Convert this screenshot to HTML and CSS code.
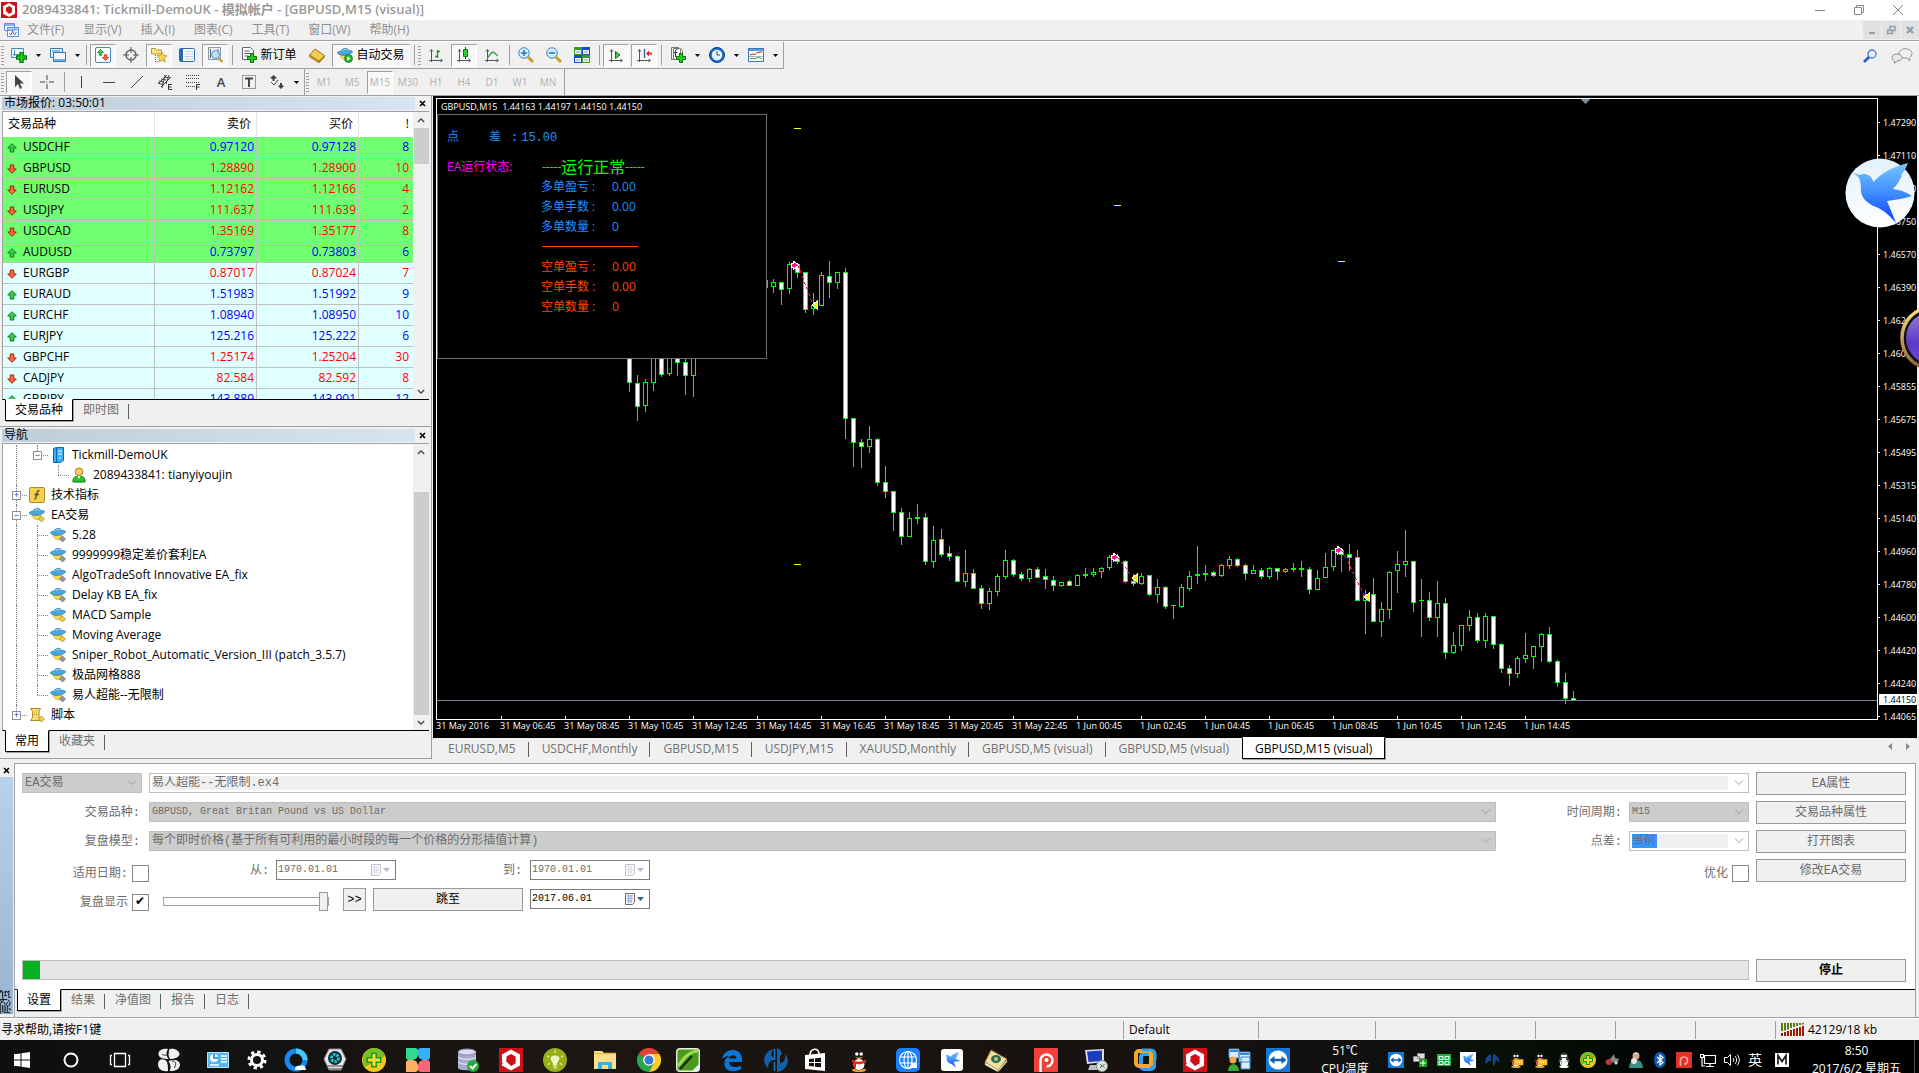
FILE: index.html
```html
<!DOCTYPE html>
<html lang="zh-CN">
<head>
<meta charset="utf-8">
<title>2089433841: Tickmill-DemoUK - 模拟帐户 - [GBPUSD,M15 (visual)]</title>
<link rel="stylesheet" href="styles.css">
</head>
<body>
<svg class="defs" aria-hidden="true">
  <defs>
    <linearGradient id="birdFill" x1="0" y1="0" x2="0" y2="1"><stop offset="0" stop-color="#74c6ff"/><stop offset=".5" stop-color="#3f8dff"/><stop offset="1" stop-color="#0a3cff"/></linearGradient>
    <linearGradient id="birdBg" x1="0" y1="0" x2="0" y2="1"><stop offset="0" stop-color="#e3f0fc"/><stop offset="1" stop-color="#fff"/></linearGradient>
    <linearGradient id="orbRing" x1="0" y1="0" x2="0" y2="1"><stop offset="0" stop-color="#ffe08a"/><stop offset="1" stop-color="#8a6232"/></linearGradient>
    <linearGradient id="orbFill" x1="0" y1="0" x2="0" y2="1"><stop offset="0" stop-color="#9a80cc"/><stop offset=".6" stop-color="#5a38c8"/><stop offset="1" stop-color="#7048d8"/></linearGradient>
    <symbol id="up" viewBox="0 0 10 10"><path d="M5 .7 9.3 5H6.8v4H3.2V5H.7z" fill="#3ccc4c" stroke="#0d7a1c"/></symbol>
    <symbol id="down" viewBox="0 0 10 10"><path d="M5 9.3 9.3 5H6.8V1H3.2v4H.7z" fill="#ff6a3c" stroke="#a81c04"/></symbol>
    <symbol id="hat" viewBox="0 0 16 16"><path d="M3.500 8c0 3.500 3 5 6 4.500L12 8z" fill="#f6dc4c" stroke="#b89420" stroke-width=".6"/><path d="M4 4.500C4.500 1 10.500 0 11.500 3.500c2 0 3.800.2 4 1C15.700 6.500 10 8.500 6 8.200 3 8 .3 7 .5 5.500c.1-.9 2-1.200 3.500-1z" fill="#4aa8e0" stroke="#2574a8" stroke-width=".7"/><path d="M5.500 4c1-2 4-2.200 5-.5" fill="none" stroke="#a8dcf8"/></symbol>
    <symbol id="ea" viewBox="0 0 16 16"><use href="#hat" width="16" height="16"/><path d="M12.500 9l3 3-3 3-3-3z" fill="#9a9a9a" stroke="#6a6a6a" stroke-width=".7"/></symbol>
    <symbol id="eay" viewBox="0 0 16 16"><use href="#hat" width="16" height="16"/><path d="M12.500 9l3 3-3 3-3-3z" fill="#f4cc40" stroke="#a88018" stroke-width=".7"/></symbol>
    <symbol id="plus" viewBox="0 0 10 10"><path d="M3.500 .5h3v3h3v3h-3v3h-3v-3h-3v-3h3z" fill="#1ed01e" stroke="#067806"/></symbol>
    <symbol id="axes" viewBox="0 0 16 16"><path d="M3.500 3v12M1 13.500h13M2 4.500l1.500-2L5 4.500M12.500 12l2 1.500-2 1.500" fill="none" stroke="#555"/></symbol>
    <symbol id="caret" viewBox="0 0 5 3"><path d="M0 0h5L2.500 3z" fill="#000"/></symbol>
    <symbol id="chev" viewBox="0 0 10 6"><path d="M1 .5l4 4 4-4" fill="none" stroke="#a0a0a0"/></symbol>
    <symbol id="cal" viewBox="0 0 20 14"><path d="M1.500 1.500h9v9l-2 2h-7z" fill="#eef2fa" stroke="#7a6a6a"/><path d="M3 4h6M3 6.500h6M3 9h5M4.500 3v8M7 3v8" stroke="#8aa0c8" stroke-width=".8"/><path d="M13 5h7l-3.500 4z" fill="#3a5a98"/></symbol>
    <symbol id="fxlogo" viewBox="0 0 24 24"><path d="M0 0h24v24H0z" fill="#d01018"/><path d="M12 1.500l9 5v2.500l-4 2-.5-2.500L12 6 7.500 8.500v5L5 16l-2-1.500v-8z" fill="#fff"/><path d="M12 22.500l-9-5V16l4.500-2.500 4.500 4.500 4.500-2.500v-5L19 8.500l2 1v8z" fill="#fff"/><path d="M7 13l5-5M12 16.500l5-5" stroke="#d01018"/></symbol>
    <symbol id="bird" viewBox="0 0 68 60"><path d="M0 8l13 4c4-2 11-1 13.500 7C34 10 48 3 61 0c-2 5-4 9-7 12l1 1c-3 5-5 9-9 13 8 1 15 4 19 7-10 3-18 4-25 5 3 7 6 14 9 22-5-6-12-13-20-16-10-4-16-10-15-20-1-7 0-12-14-16z" fill="url(#birdFill)"/></symbol>
    <symbol id="tv" viewBox="0 0 24 24"><path d="M0 0h24v24H0z" fill="#1478d4"/><circle cx="12" cy="12" r="9.500" fill="#fff"/><path d="M3.500 12l5-4v2.700h7V8l5 4-5 4v-2.700h-7V16z" fill="#1060b8"/></symbol>
    <symbol id="qq" viewBox="0 0 24 24"><ellipse cx="12" cy="22" rx="7" ry="2" fill="#f8a818"/><ellipse cx="12" cy="14" rx="8.500" ry="8.500" fill="#111"/><ellipse cx="12" cy="8" rx="6.500" ry="7.500" fill="#1a1a1a"/><ellipse cx="12" cy="16.500" rx="5.500" ry="5.500" fill="#fff"/><circle cx="9.800" cy="6" r="1.700" fill="#fff"/><circle cx="14.200" cy="6" r="1.700" fill="#fff"/><path d="M8 9.500h8l-4 2z" fill="#f8a818"/><path d="M5 11.500c5 3 9 3 14 0v3c-5 2-7 2-10 1.500V20H7v-5l-2-1z" fill="#e82818"/></symbol>
    <symbol id="plus360" viewBox="0 0 24 24"><circle cx="12" cy="12" r="12" fill="#f8c818"/><path d="M12 0a12 12 0 0 1 11 8L3 19A12 12 0 0 1 12 0z" fill="#78c028"/><path d="M9 4.500h6V9h4.500v6H15v4.500H9V15H4.500V9H9z" fill="#18982c"/><path d="M10.500 6h3v4.500H18v3h-4.500V18h-3v-4.500H6v-3h4.500z" fill="#f4dc30"/></symbol>
  </defs>
</svg>

<header class="titlebar">
  <svg class="i16"><use href="#fxlogo"/></svg>
  <h1>2089433841: Tickmill-DemoUK - 模拟帐户 - [GBPUSD,M15 (visual)]</h1>
  <div class="winbtns">
    <button aria-label="最小化"><svg class="i12" viewBox="0 0 12 12"><path d="M1 6.500h10" stroke="#888"/></svg></button>
    <button aria-label="还原"><svg class="i12" viewBox="0 0 12 12"><path d="M1.500 3.500h7v7h-7zM3.500 3V1.500h7v7H9" fill="none" stroke="#888"/></svg></button>
    <button aria-label="关闭"><svg class="i12" viewBox="0 0 12 12"><path d="M1 1l10 10M11 1L1 11" stroke="#888"/></svg></button>
  </div>
</header>

<nav class="menubar">
  <svg class="i16" viewBox="0 0 16 16"><path d="M1.500 1.500h10v7h-10zM4.500 5.500h11v9h-11z" fill="#fff" stroke="#5a90e0"/><path d="M2 3h9M5 7.500h10" stroke="#8ab4f0" stroke-width="2"/><path d="M6 11l2 2 1.500-4 2 4 2-3" fill="none" stroke="#3a70c8"/></svg>
  <button>文件(F)</button><button>显示(V)</button><button>插入(I)</button><button>图表(C)</button><button>工具(T)</button><button>窗口(W)</button><button>帮助(H)</button>
  <div class="mdibtns">
    <button aria-label="最小化图表"><svg class="i10" viewBox="0 0 10 10"><path d="M2 8h6" stroke="#8fa0b0" stroke-width="2"/></svg></button>
    <button aria-label="还原图表"><svg class="i10" viewBox="0 0 10 10"><path d="M1.500 5.500h5v3h-5zM4 4V1.500h5v4H7.500M1 5h6M4 1.500h5" fill="none" stroke="#8fa0b0" stroke-width="1.500"/></svg></button>
    <button aria-label="关闭图表"><svg class="i10" viewBox="0 0 10 10"><path d="M2 2l6 6M8 2L2 8" stroke="#8fa0b0" stroke-width="2.400"/></svg></button>
  </div>
</nav>

<div class="toolrow">
  <div class="toolbar">
    <i class="grip"></i>
    <button class="tb" aria-label="新图表"><svg viewBox="0 0 16 16"><path d="M.5 1.500h12v9H.5z" fill="#eef6ff" stroke="#4a88c0"/><path d="M3.500 3v6M2 7.500h7" stroke="#4a88c0"/><use href="#plus" x="5" y="5" width="11" height="11"/></svg></button>
    <button class="drop" aria-label="新图表菜单"><svg><use href="#caret"/></svg></button>
    <button class="tb" aria-label="配置"><svg viewBox="0 0 16 16"><path d="M.5 1.500h12v9H.5z" fill="#dceeff" stroke="#3a78b0"/><path d="M3.500 5.500h12v9h-12z" fill="#eef6ff" stroke="#3a78b0"/><path d="M4 13h11" stroke="#78acdc" stroke-width="2"/><path d="M2 4h8" stroke="#4a88c0"/></svg></button>
    <button class="drop" aria-label="配置菜单"><svg><use href="#caret"/></svg></button>
    <i class="sep"></i>
    <button class="tb on" aria-label="市场报价"><svg viewBox="0 0 16 16"><rect x=".5" y=".5" width="15" height="15" rx="1.500" fill="#fff" stroke="#4a88c0"/><use href="#up" x="2" y="2" width="7" height="7"/><use href="#down" x="7" y="7" width="7" height="7"/></svg></button>
    <button class="tb" aria-label="数据窗口"><svg viewBox="0 0 16 16"><circle cx="8" cy="8" r="5" fill="none" stroke="#666" stroke-width="1.500"/><path d="M8 0v6M8 10v6M0 8h6M10 8h6" stroke="#555"/></svg></button>
    <button class="tb on" aria-label="导航"><svg viewBox="0 0 16 16"><path d="M.5 1.500h4l1 1.500h5v4H.5z" fill="#fce288" stroke="#c09828"/><path d="M4.500 8v7h3" fill="none" stroke="#666" stroke-dasharray="1"/><path d="M11 5l1.500 3.500 3.500.3-2.700 2.300.9 3.900-3.200-2-3.200 2 .9-3.900L6 8.800l3.500-.3z" fill="#fcd848" stroke="#b08418" stroke-width=".7"/></svg></button>
    <button class="tb" aria-label="终端"><svg viewBox="0 0 16 16"><rect x=".5" y="1.500" width="15" height="13" rx="1" fill="#fff" stroke="#2a68b0"/><path d="M2.500 2v12" stroke="#2a68b0" stroke-width="3"/><path d="M6 4.500h8M6 7h8M6 9.500h8M6 12h8" stroke="#b8ccdc"/></svg></button>
    <button class="tb on" aria-label="策略测试"><svg viewBox="0 0 16 16"><path d="M1.500.5h12v12h-12z" fill="#e8eef4" stroke="#8898a8"/><path d="M3.500 2v9M11 2v5" stroke="#667"/><circle cx="8.500" cy="7.500" r="4" fill="#b8dcf8" fill-opacity=".8" stroke="#5a90c0"/><path d="M11.500 11l4 4" stroke="#c89820" stroke-width="2.200"/></svg></button>
    <i class="sep"></i>
    <button class="tb wide"><svg viewBox="0 0 16 16"><path d="M1.500.5h8l3 3v9h-11z" fill="#fff" stroke="#666"/><path d="M3.500 4h5M3.500 6.500h7M3.500 9h4" stroke="#556"/><use href="#plus" x="6" y="6" width="10" height="10"/></svg>新订单</button>
    <button class="tb" aria-label="MetaEditor"><svg viewBox="0 0 16 16"><path d="M.5 8L6 2l9.500 6.500L10 14z" fill="#f4cc50" stroke="#a07818"/><path d="M.5 8v2l9.500 6v-2zM10 14v2l5.500-5.500v-2z" fill="#c89428" stroke="#a07818" stroke-width=".6"/></svg></button>
    <button class="tb wide on auto"><svg viewBox="0 0 16 16"><use href="#hat" width="16" height="16"/><circle cx="11.500" cy="11.500" r="4" fill="#28b028" stroke="#0a6a0a" stroke-width=".6"/><path d="M10.200 9.300l3.500 2.200-3.500 2.200z" fill="#fff"/></svg>自动交易</button>
    <i class="sep"></i><i class="grip"></i>
    <button class="tb" aria-label="柱状图"><svg viewBox="0 0 16 16"><use href="#axes"/><path d="M9.500 3v8M7 9.500h2.500M9.500 4.500H12" stroke="#1a9a1a" fill="none" stroke-width="1.400"/></svg></button>
    <button class="tb on" aria-label="蜡烛图"><svg viewBox="0 0 16 16"><use href="#axes"/><path d="M9.500 0v12" stroke="#0a6a0a"/><path d="M7.500 2.500h4v7h-4z" fill="#2cd02c" stroke="#0a7a0a"/></svg></button>
    <button class="tb" aria-label="折线图"><svg viewBox="0 0 16 16"><use href="#axes"/><path d="M3 11c2-1 4-6 6-6 2 .5 3 3 5 4" fill="none" stroke="#3aa03a" stroke-width="1.300"/></svg></button>
    <i class="sep"></i>
    <button class="tb" aria-label="放大"><svg viewBox="0 0 16 16"><path d="M10 10l5 5" stroke="#c8a020" stroke-width="3"/><circle cx="6" cy="6" r="5.300" fill="#d0ecfc" stroke="#3a88c8"/><path d="M6 3v6M3 6h6" stroke="#2878b8" stroke-width="1.600"/></svg></button>
    <button class="tb" aria-label="缩小"><svg viewBox="0 0 16 16"><path d="M10 10l5 5" stroke="#c8a020" stroke-width="3"/><circle cx="6" cy="6" r="5.300" fill="#d0ecfc" stroke="#3a88c8"/><path d="M3 6h6" stroke="#2878b8" stroke-width="1.600"/></svg></button>
    <button class="tb" aria-label="平铺"><svg viewBox="0 0 16 16"><path d="M0 0h8v8H0zM8 8h8v8H8z" fill="#3c9a1c"/><path d="M8 0h8v8H8zM0 8h8v8H0z" fill="#1a4cc8"/><path d="M1 3h6v4H1zM9 3h6v4H9zM1 11h6v4H1zM9 11h6v4H9z" fill="#e8f4f0"/><path d="M2 5h4M10 5h4M2 13h4M10 13h4" stroke="#88a8b8"/></svg></button>
    <i class="sep"></i>
    <button class="tb on" aria-label="自动滚动"><svg viewBox="0 0 16 16"><use href="#axes"/><path d="M7.500 4.500v7l4.500-3.500z" fill="#3ccc4c" stroke="#0a7a0a"/></svg></button>
    <button class="tb on" aria-label="图表平移"><svg viewBox="0 0 16 16"><use href="#axes"/><path d="M8.500 2v9" stroke="#2868a8" stroke-width="1.400"/><path d="M10 6.500l3-3v2h3v2h-3v2z" fill="#d83010"/></svg></button>
    <i class="sep"></i>
    <button class="tb" aria-label="指标"><svg viewBox="0 0 16 16"><path d="M3.500 1.500h7l2 2v9h-9zM1.500.5h7l2 2v10h-9z" fill="#fff" stroke="#777"/><path d="M7.500 2.500c-2-.5-2 1-2 3V10M3.500 5.500h4" fill="none" stroke="#333"/><use href="#plus" x="6" y="6" width="10" height="10"/></svg></button>
    <button class="drop" aria-label="指标菜单"><svg><use href="#caret"/></svg></button>
    <button class="tb" aria-label="周期"><svg viewBox="0 0 16 16"><circle cx="8" cy="8" r="7.500" fill="#1a70c8" stroke="#0a3c88"/><circle cx="8" cy="8" r="5.200" fill="#e8f4ff"/><path d="M8 4v4h3" fill="none" stroke="#444"/></svg></button>
    <button class="drop" aria-label="周期菜单"><svg><use href="#caret"/></svg></button>
    <button class="tb" aria-label="模板"><svg viewBox="0 0 16 16"><rect x=".5" y="1.500" width="15" height="13" fill="#fff" stroke="#3a78b8"/><path d="M1 3h14" stroke="#5a9ce0" stroke-width="2"/><path d="M2 8l3-1 2 .5 2-2 5-.5" fill="none" stroke="#a03018"/><path d="M2 12l3-1 2 1 3-2 2 1 2 1" fill="none" stroke="#3a9a3a"/><path d="M1 9.500h14" stroke="#a8b8c8"/></svg></button>
    <button class="drop" aria-label="模板菜单"><svg><use href="#caret"/></svg></button>
    <i class="edge"></i>
  </div>
  <div class="topright">
    <button aria-label="搜索"><svg class="i14" viewBox="0 0 14 14"><circle cx="9" cy="5" r="4" fill="#e8f0ff" stroke="#4a78e0" stroke-width="1.300"/><path d="M6 8l-5 5" stroke="#2a58d0" stroke-width="2.600"/></svg></button>
    <button aria-label="消息"><svg class="i20" viewBox="0 0 22 16"><path d="M14 .7c4 0 7 2 7 4.600S18.500 10 18.500 10l.5 3-3-3h-3C9 9 8 7 8 5.300S10.500.7 14 .7z" fill="#f0f0f4" stroke="#909090"/><path d="M6 6c3 0 5 1.600 5 3.500S9 13 6 13l-2.500 2.500V13C2 12.500 1 11 1 9.500 1 7.600 3 6 6 6z" fill="#e8e8f0" stroke="#909090"/></svg></button>
  </div>
</div>

<div class="toolrow second">
  <div class="toolbar">
    <i class="grip"></i>
    <button class="tb on" aria-label="光标"><svg viewBox="0 0 16 16"><path d="M4 1v12l3-3 2 5 2-1-2-4.500h4z" fill="#444"/></svg></button>
    <button class="tb" aria-label="十字准线"><svg viewBox="0 0 16 16"><path d="M8 1v5M8 10v5M1 8h5M10 8h5M7.500 8h1" stroke="#444"/></svg></button>
    <i class="sep"></i>
    <button class="tb" aria-label="垂直线"><svg viewBox="0 0 16 16"><path d="M8.500 2v12" stroke="#444"/></svg></button>
    <button class="tb" aria-label="水平线"><svg viewBox="0 0 16 16"><path d="M2 8.500h12" stroke="#444"/></svg></button>
    <button class="tb" aria-label="趋势线"><svg viewBox="0 0 16 16"><path d="M2 14L14 2" stroke="#444"/></svg></button>
    <button class="tb" aria-label="等距通道"><svg viewBox="0 0 16 16"><path d="M1 10L10 1M4 13L14 3M2 7l5 1M4 5l5 1M1 9l6 2M7 3l6 1M5 14l3-13M9 10l3-9" stroke="#444"/><path d="M11.500 10v5.500H15M11.500 10.500H15M11.500 13h3" fill="none" stroke="#333"/></svg></button>
    <button class="tb" aria-label="斐波纳契"><svg viewBox="0 0 16 16"><path d="M1 1.500h13M1 4.500h13M1 8.500h13M1 12.500h9" stroke="#444" stroke-dasharray="1"/><path d="M11.500 16v-5.500H15M11.500 13h3" fill="none" stroke="#333"/></svg></button>
    <button class="tb glyph">A</button>
    <button class="tb" aria-label="文字标签"><svg viewBox="0 0 16 16"><path d="M1.500 1.500h13v13h-13z" fill="none" stroke="#444" stroke-dasharray="1"/><path d="M4 4.500h8M8 4.500V13" stroke="#444" stroke-width="2"/></svg></button>
    <button class="tb" aria-label="箭头"><svg viewBox="0 0 16 16"><path d="M1 4l3.500-3L8 4 5.500 5v2h-2V5zM9 12l2-1V9h2v2l2 1-3 3z" fill="#444"/><path d="M2 8l3 3 4-5" fill="none" stroke="#444"/></svg></button>
    <button class="drop" aria-label="箭头菜单"><svg><use href="#caret"/></svg></button>
    <i class="edge"></i><i class="grip"></i>
    <button class="tb tf">M1</button><button class="tb tf">M5</button><button class="tb tf on">M15</button><button class="tb tf">M30</button><button class="tb tf">H1</button><button class="tb tf">H4</button><button class="tb tf">D1</button><button class="tb tf">W1</button><button class="tb tf">MN</button>
    <i class="edge"></i>
  </div>
</div>

<main class="workspace">
  <aside class="dock">
    <section class="pane market">
      <div class="panetitle"><h2>市场报价: 03:50:01</h2><button aria-label="关闭市场报价"><svg class="x7" viewBox="0 0 7 7"><path d="M1 1l5 5M6 1L1 6" stroke="#000" stroke-width="1.600"/></svg></button></div>
      <div class="box">
        <div class="listwrap">
          <table>
            <colgroup><col class="c1"><col class="c2"><col class="c3"><col></colgroup>
            <thead><tr><th>交易品种</th><th>卖价</th><th>买价</th><th>!</th></tr></thead>
            <tbody>
              <tr class="hot u"><td><svg><use href="#up"/></svg>USDCHF</td><td>0.97120</td><td>0.97128</td><td>8</td></tr>
              <tr class="hot d"><td><svg><use href="#down"/></svg>GBPUSD</td><td>1.28890</td><td>1.28900</td><td>10</td></tr>
              <tr class="hot d"><td><svg><use href="#down"/></svg>EURUSD</td><td>1.12162</td><td>1.12166</td><td>4</td></tr>
              <tr class="hot d"><td><svg><use href="#down"/></svg>USDJPY</td><td>111.637</td><td>111.639</td><td>2</td></tr>
              <tr class="hot d"><td><svg><use href="#down"/></svg>USDCAD</td><td>1.35169</td><td>1.35177</td><td>8</td></tr>
              <tr class="hot u"><td><svg><use href="#up"/></svg>AUDUSD</td><td>0.73797</td><td>0.73803</td><td>6</td></tr>
              <tr class="d"><td><svg><use href="#down"/></svg>EURGBP</td><td>0.87017</td><td>0.87024</td><td>7</td></tr>
              <tr class="u"><td><svg><use href="#up"/></svg>EURAUD</td><td>1.51983</td><td>1.51992</td><td>9</td></tr>
              <tr class="u"><td><svg><use href="#up"/></svg>EURCHF</td><td>1.08940</td><td>1.08950</td><td>10</td></tr>
              <tr class="u"><td><svg><use href="#up"/></svg>EURJPY</td><td>125.216</td><td>125.222</td><td>6</td></tr>
              <tr class="d"><td><svg><use href="#down"/></svg>GBPCHF</td><td>1.25174</td><td>1.25204</td><td>30</td></tr>
              <tr class="d"><td><svg><use href="#down"/></svg>CADJPY</td><td>82.584</td><td>82.592</td><td>8</td></tr>
              <tr class="u"><td><svg><use href="#up"/></svg>GBPJPY</td><td>143.889</td><td>143.901</td><td>12</td></tr>
            </tbody>
          </table>
        </div>
        <div class="scroll"><svg viewBox="0 0 10 6"><path d="M1 5l4-4 4 4" fill="none" stroke="#505050" stroke-width="1.800"/></svg><i class="thumb short"></i><svg viewBox="0 0 10 6"><path d="M1 1l4 4 4-4" fill="none" stroke="#505050" stroke-width="1.800"/></svg></div>
      </div>
      <div class="tabs"><button class="sel">交易品种</button><button>即时图</button></div>
    </section>
    <section class="pane navigator">
      <div class="panetitle"><h2>导航</h2><button aria-label="关闭导航"><svg class="x7" viewBox="0 0 7 7"><path d="M1 1l5 5M6 1L1 6" stroke="#000" stroke-width="1.600"/></svg></button></div>
      <div class="box">
        <ul class="tree">
          <li><i class="g v"></i><i class="g end h"><b>−</b></i><svg viewBox="0 0 16 16"><path d="M3.500 1.500l3-1h7v13l-3 2h-7z" fill="#3ab0f4" stroke="#0a68b8"/><path d="M6.500 1v14" stroke="#0a68b8"/><path d="M8 4h4M8 7h4M9 11h2" stroke="#fff"/></svg>Tickmill-DemoUK</li>
          <li><i class="g v"></i><i class="g"></i><i class="g end h"></i><svg viewBox="0 0 16 16"><path d="M2 15c-.5-4 2-6 6-6s6.500 2 6 6z" fill="#2cc42c" stroke="#0a7a0a"/><path d="M6.500 9l1.500 3 1.500-3z" fill="#fff"/><circle cx="8" cy="4.800" r="3.800" fill="#f8d060" stroke="#b07818"/></svg>2089433841: tianyiyoujin</li>
          <li><i class="g v h"><b>+</b></i><svg viewBox="0 0 16 16"><rect x=".5" y=".5" width="15" height="15" rx="1" fill="#f4d050" stroke="#b08c20"/><path d="M10.500 4c-2-1-2.500 1-3 4s-.5 4-2 4M5.500 7.500h4.500" fill="none" stroke="#5a4a10" stroke-width="1.300"/></svg>技术指标</li>
          <li><i class="g v h"><b>−</b></i><svg><use href="#eay"/></svg>EA交易</li>
          <li><i class="g v"></i><i class="g v h"></i><svg><use href="#ea"/></svg>5.28</li>
          <li><i class="g v"></i><i class="g v h"></i><svg><use href="#ea"/></svg>9999999稳定差价套利EA</li>
          <li><i class="g v"></i><i class="g v h"></i><svg><use href="#ea"/></svg>AlgoTradeSoft Innovative EA_fix</li>
          <li><i class="g v"></i><i class="g v h"></i><svg><use href="#ea"/></svg>Delay KB EA_fix</li>
          <li><i class="g v"></i><i class="g v h"></i><svg><use href="#eay"/></svg>MACD Sample</li>
          <li><i class="g v"></i><i class="g v h"></i><svg><use href="#eay"/></svg>Moving Average</li>
          <li><i class="g v"></i><i class="g v h"></i><svg><use href="#ea"/></svg>Sniper_Robot_Automatic_Version_III (patch_3.5.7)</li>
          <li><i class="g v"></i><i class="g v h"></i><svg><use href="#ea"/></svg>极品网格888</li>
          <li><i class="g v"></i><i class="g end h"></i><svg><use href="#ea"/></svg>易人超能--无限制</li>
          <li><i class="g end h"><b>+</b></i><svg viewBox="0 0 16 16"><path d="M1.500 1.500h10l-1.500 3v6l1.500 3h-10l2-3v-6z" fill="#f8dc70" stroke="#b08c20"/><path d="M5 5h4M5 7.500h4" stroke="#b08c20" stroke-dasharray="1"/><path d="M12.500 9l3 3-3 3-3-3z" fill="#f4cc40" stroke="#a88018" stroke-width=".7"/></svg>脚本</li>
        </ul>
        <div class="scroll"><svg viewBox="0 0 10 6"><path d="M1 5l4-4 4 4" fill="none" stroke="#505050" stroke-width="1.800"/></svg><i class="thumb long"></i><svg viewBox="0 0 10 6"><path d="M1 1l4 4 4-4" fill="none" stroke="#505050" stroke-width="1.800"/></svg></div>
      </div>
      <div class="tabs"><button class="sel">常用</button><button>收藏夹</button></div>
    </section>
  </aside>

  <section class="chartarea">
    <div class="chart">
      <div class="plot">
        <svg class="candles" id="candles" aria-label="GBPUSD M15"></svg>
        <p class="ohlc">GBPUSD,M15&nbsp; 1.44163 1.44197 1.44150 1.44150</p>
        <div class="info">
          <div class="spread"><span>点</span><span>差</span><span>:</span><span>15.00</span></div>
          <div class="state"><span class="magenta">EA运行状态:</span><span class="lime"><s>-----</s>运行正常<s>-----</s></span></div>
          <dl class="buy"><dt>多单盈亏 :</dt><dd>0.00</dd><dt>多单手数 :</dt><dd>0.00</dd><dt>多单数量 :</dt><dd>0</dd></dl>
          <hr>
          <dl class="sell"><dt>空单盈亏 :</dt><dd>0.00</dd><dt>空单手数 :</dt><dd>0.00</dd><dt>空单数量 :</dt><dd>0</dd></dl>
        </div>
      </div>
      <ol class="prices">
        <li>1.47290</li><li>1.47110</li><li>1.46930</li><li>1.46750</li><li>1.46570</li><li>1.46390</li><li>1.46215</li><li>1.46035</li><li>1.45855</li><li>1.45675</li><li>1.45495</li><li>1.45315</li><li>1.45140</li><li>1.44960</li><li>1.44780</li><li>1.44600</li><li>1.44420</li><li>1.44240</li><li>1.44065</li>
      </ol>
      <span class="bid">1.44150</span>
      <ol class="times">
        <li>31 May 2016</li><li>31 May 06:45</li><li>31 May 08:45</li><li>31 May 10:45</li><li>31 May 12:45</li><li>31 May 14:45</li><li>31 May 16:45</li><li>31 May 18:45</li><li>31 May 20:45</li><li>31 May 22:45</li><li>1 Jun 00:45</li><li>1 Jun 02:45</li><li>1 Jun 04:45</li><li>1 Jun 06:45</li><li>1 Jun 08:45</li><li>1 Jun 10:45</li><li>1 Jun 12:45</li><li>1 Jun 14:45</li>
      </ol>
    </div>
    <div class="tabs charttabs">
      <button>EURUSD,M5</button><button>USDCHF,Monthly</button><button>GBPUSD,M15</button><button>USDJPY,M15</button><button>XAUUSD,Monthly</button><button>GBPUSD,M5 (visual)</button><button>GBPUSD,M5 (visual)</button><button class="sel">GBPUSD,M15 (visual)</button>
      <span class="tabnav"><svg viewBox="0 0 4 7"><path d="M4 0v7L0 3.500z" fill="#888"/></svg><svg viewBox="0 0 4 7"><path d="M0 0v7l4-3.500z" fill="#888"/></svg></span>
    </div>
  </section>
</main>

<section class="tester">
  <div class="strip"><button aria-label="关闭测试"><svg class="x7" viewBox="0 0 7 7"><path d="M1 1l5 5M6 1L1 6" stroke="#000" stroke-width="1.600"/></svg></button><h2>测试</h2></div>
  <div class="testbody">
    <form class="form">
      <div class="row">
        <span class="combo kind"><select disabled aria-label="类型"><option>EA交易</option></select><svg><use href="#chev"/></svg></span>
        <span class="combo edit grow"><input disabled aria-label="EA文件" value="易人超能--无限制.ex4"><svg><use href="#chev"/></svg></span>
        <button type="button" class="btn" disabled>EA属性</button>
      </div>
      <div class="row">
        <label class="lead" for="sym">交易品种:</label>
        <span class="combo grow latin"><select id="sym" disabled><option>GBPUSD, Great Britan Pound vs US Dollar</option></select><svg><use href="#chev"/></svg></span>
        <label class="mid" for="per">时间周期:</label>
        <span class="combo kind latin"><select id="per" disabled><option>M15</option></select><svg><use href="#chev"/></svg></span>
        <button type="button" class="btn" disabled>交易品种属性</button>
      </div>
      <div class="row">
        <label class="lead" for="model">复盘模型:</label>
        <span class="combo grow"><select id="model" disabled><option>每个即时价格(基于所有可利用的最小时段的每一个价格的分形插值计算)</option></select><svg><use href="#chev"/></svg></span>
        <label class="mid" for="spr">点差:</label>
        <span class="combo edit kind picked"><input id="spr" disabled value="当前"><svg><use href="#chev"/></svg></span>
        <button type="button" class="btn" disabled>打开图表</button>
      </div>
      <div class="row">
        <label class="lead check" for="usedate">适用日期:</label><input type="checkbox" id="usedate" disabled>
        <label class="from" for="d1">从:</label><span class="date off"><input id="d1" disabled value="1970.01.01"><svg><use href="#cal"/></svg></span>
        <label class="to" for="d2">到:</label><span class="date off"><input id="d2" disabled value="1970.01.01"><svg><use href="#cal"/></svg></span>
        <label class="opt check" for="opt">优化</label><input type="checkbox" id="opt" disabled>
        <button type="button" class="btn" disabled>修改EA交易</button>
      </div>
      <div class="row">
        <label class="lead check" for="vis">复盘显示</label><input type="checkbox" id="vis" checked>
        <input type="range" aria-label="速度" min="0" max="32" value="32">
        <button type="button" class="btn step">&gt;&gt;</button>
        <button type="button" class="btn skip">跳至</button>
        <span class="date"><input aria-label="跳至日期" value="2017.06.01"><svg><use href="#cal"/></svg></span>
      </div>
      <div class="row last">
        <progress value="1" max="100" aria-label="测试进度"></progress>
        <button type="button" class="btn stop">停止</button>
      </div>
    </form>
    <div class="tabs"><button class="sel">设置</button><button>结果</button><button>净值图</button><button>报告</button><button>日志</button></div>
  </div>
</section>

<footer class="status">
  <span class="help">寻求帮助,请按F1键</span><span class="s1">Default</span><span class="s2"></span><span class="s3"></span><span class="s3"></span><span class="s3"></span><span class="s3"></span><span class="s3"></span>
  <span class="net"><svg viewBox="0 0 23 13"><path d="M1 0v8M4 0v7.500M7 0v6.500M10 0v5M13 0v4M16 0v3M19 0v2M22 0v1.500" stroke="#5a7a10" stroke-width="2"/><path d="M1 10v3M4 9v4M7 8v5M10 7v6M13 6v7M16 5v8M19 4v9M22 3v10" stroke="#9a1c08" stroke-width="2"/></svg>42129/18 kb</span>
</footer>

<div class="taskbar">
  <div class="apps">
    <button aria-label="开始"><svg viewBox="0 0 24 24"><path d="M4 6.300l6.500-.9v6H4zM11.500 5.200L20 4v7.400h-8.500zM4 12.500h6.500v6.100L4 17.700zM11.500 12.500H20V20l-8.500-1.200z" fill="#fff"/></svg></button>
    <button class="l" aria-label="搜索"><svg viewBox="0 0 24 24"><circle cx="12" cy="12" r="6.500" fill="none" stroke="#fff" stroke-width="2"/></svg></button>
    <button class="l" aria-label="任务视图"><svg viewBox="0 0 24 24"><path d="M6.500 5.500h11v13h-11zM4 7.500H2.500v9H4M20 7.500h1.500v9H20" fill="none" stroke="#fff" stroke-width="1.300"/></svg></button>
    <button class="l" aria-label="搜狗"><svg viewBox="0 0 24 24"><path d="M11 1C5 0 1 3 1.500 6.500S7 11 11.500 11C9 8 9 4 11 1zM12.500 1c6-1 10 2 10 5.500-1 3-5 4.500-9.500 4.500-2-3-2-7-.5-10zM1 16c0-4 4-6 7-4 2 1 3 3 3 11-6 1-10-2-10-7zM12.500 23c2-3 1-7-1-10 6-2 11-1 11.500 3.500 0 4-4 7-10.500 6.500z" fill="#f0f0f0"/><path d="M5 6c2 2 5 2 7-2M15 13c4 0 5 4 2 7" fill="none" stroke="#222"/></svg></button>
    <button class="l" aria-label="控制面板"><svg viewBox="0 0 24 24"><path d="M1.500 4.500h21v15h-21z" fill="#54b8f0" stroke="#b8e4fc"/><circle cx="8" cy="10" r="4" fill="#fff"/><path d="M8 6v4h4" fill="none" stroke="#1878c0" stroke-width="1.500"/><path d="M15 8h6M15 11h6M15 14h6M4 17h9" stroke="#fff" stroke-width="1.600"/></svg></button>
    <button class="s" aria-label="设置"><svg viewBox="0 0 24 24"><circle cx="12" cy="12" r="5.500" fill="none" stroke="#fff" stroke-width="3"/><circle cx="12" cy="12" r="8" fill="none" stroke="#fff" stroke-width="3" stroke-dasharray="3.200 3.080"/></svg></button>
    <button class="s" aria-label="浏览器"><svg viewBox="0 0 24 24"><circle cx="12" cy="12" r="9" fill="none" stroke="#1888f0" stroke-width="5"/><path d="M12 3a9 9 0 0 1 9 9" fill="none" stroke="#40c8ff" stroke-width="5"/><path d="M11 22c0-4 3-5 5-4 2-2 6 0 6 4z" fill="#fff"/></svg></button>
    <button class="s" aria-label="驱动精灵"><svg viewBox="0 0 24 24"><path d="M6 1h12l5 10-5 11H6L1 11z" fill="#e4e8ec" stroke="#888"/><path d="M4 18h16M6 21h12" stroke="#777" stroke-width="1.500"/><circle cx="12" cy="10" r="7" fill="#1c2c34"/><circle cx="12" cy="10" r="3.500" fill="none" stroke="#18c8d8" stroke-width="3" stroke-dasharray="2.500 1"/></svg></button>
    <button class="s" aria-label="360安全卫士"><svg><use href="#plus360"/></svg></button>
    <button class="m" aria-label="四叶草"><svg viewBox="0 0 24 24"><path d="M0 0h9a3 3 0 0 1 3 3v9H3a3 3 0 0 1-3-3z" fill="#30d890"/><path d="M24 0h-9a3 3 0 0 0-3 3v9h9a3 3 0 0 0 3-3z" fill="#38b0f8"/><path d="M0 24h9a3 3 0 0 0 3-3v-9H3a3 3 0 0 0-3 3z" fill="#ffb060"/><path d="M24 24h-9a3 3 0 0 1-3-3v-9h9a3 3 0 0 1 3 3z" fill="#f86878"/><path d="M12 7l2 5-2 5-2-5z" fill="#17120f"/><path d="M7 12l5-2 5 2-5 2z" fill="#17120f"/></svg></button>
    <button class="l" aria-label="数据库"><svg viewBox="0 0 24 24"><path d="M3 4v16c0 3 18 3 18 0V4z" fill="#a8a8d0"/><ellipse cx="12" cy="4" rx="9" ry="3" fill="#dcdcf0" stroke="#8888b0"/><path d="M3 9c2 3 16 3 18 0M3 14c2 3 16 3 18 0" fill="none" stroke="#f0f0fc"/><circle cx="18" cy="18" r="6" fill="#28a838"/><path d="M15 18l2.500 2.500L21.500 16" fill="none" stroke="#fff" stroke-width="2"/></svg></button>
    <button class="m" aria-label="MT4"><svg><use href="#fxlogo"/></svg></button>
    <button class="m" aria-label="灯泡"><svg viewBox="0 0 24 24"><circle cx="12" cy="12" r="12" fill="#98b018"/><path d="M8 12c-3-6 11-6 8 0-1 2-2 2-2 5h-4c0-3-1-3-2-5z" fill="#f0f4c0"/><path d="M10 18h4M10.500 20h3M12 2v3M4 8l2 1M20 8l-2 1M5 17l2-2M19 17l-2-2" stroke="#d8e490" stroke-width="1.500"/></svg></button>
    <button class="xl" aria-label="文件资源管理器"><svg viewBox="0 0 24 24"><path d="M1 3h8l2 2h12v16H1z" fill="#fce090"/><path d="M1 5.500h22" stroke="#e8b848" stroke-width="1.500"/><path d="M5 21v-7h14v7h-4v-4H9v4z" fill="#38b0e8"/></svg></button>
    <button class="m" aria-label="Chrome"><svg viewBox="0 0 24 24"><path d="M12 12L1.600 6a12 12 0 0 1 20.800 0z" fill="#e04434"/><path d="M12 12L1.600 6A12 12 0 0 0 12 24l5-9z" fill="#2ca44c"/><path d="M12 12l5 3-5 9A12 12 0 0 0 22.400 6H12z" fill="#fccc2c"/><circle cx="12" cy="12" r="5.800" fill="#fff"/><circle cx="12" cy="12" r="4.500" fill="#3a78d8"/></svg></button>
    <button class="s" aria-label="CorelDRAW"><svg viewBox="0 0 24 24"><rect x=".7" y=".7" width="22.600" height="22.600" rx="3" fill="#4c9a1c" stroke="#e8f0e0" stroke-width="1.400"/><path d="M2 18C8 10 12 4 22 3" fill="none" stroke="#9cdc50" stroke-width="3"/><path d="M4 21L16 8" stroke="#103008" stroke-width="2.500"/><path d="M16 23l7-7v7z" fill="#e8eef8"/></svg></button>
    <button class="m" aria-label="Edge"><svg viewBox="0 0 24 24"><path d="M2 11C4-1 22-1 22 11v3H9c0 6 8 6 12 3.500V21C12 26 3 22 4.500 14 5 11 7 9 10 8c-4 0-7 1.500-8 3zM9 10.500h7.500C16.500 6 10 6 9 10.500z" fill="#0878d8" fill-rule="evenodd"/></svg></button>
    <button class="m" aria-label="浏览器2"><svg viewBox="0 0 24 24"><path d="M10 1C0 3-3 14 4 20c0-5 2-7 6-8V9c-3 0-4-4 0-8zM13 0v24c10-1 14-12 8-18 1 6-2 9-5 9V8c3-2 2-6-3-8z" fill="#1060a8"/><path d="M10.500 1v11M10.500 14v9" stroke="#1878c8" stroke-width="1.500"/></svg></button>
    <button class="s" aria-label="应用商店"><svg viewBox="0 0 24 24"><path d="M2 7l20-2v18L2 21z" fill="#fff"/><path d="M7 7c0-7 9-8 9-1" fill="none" stroke="#fff" stroke-width="1.600"/><path d="M6 11l5-.5V14H6zM12 10.300l6-.6V14h-6zM6 15h5v3.500L6 18zM12 15h6v4.300l-6-.6z" fill="#111"/></svg></button>
    <button class="m" aria-label="QQ"><svg><use href="#qq"/></svg></button>
    <button class="l" aria-label="网络"><svg viewBox="0 0 24 24"><rect width="24" height="24" rx="5" fill="#1880ff"/><g fill="none" stroke="#fff" stroke-width="1.200"><circle cx="12" cy="12" r="8.500"/><ellipse cx="12" cy="12" rx="4" ry="8.500"/><path d="M12 3.500v17M4 9h16M4 15h16"/></g><path d="M15 15h6v5h-6z" fill="#fff"/></svg></button>
    <button class="m" aria-label="迅雷"><svg viewBox="0 0 24 24"><rect x="1" y="1" width="22" height="22" rx="3" fill="#fff"/><use href="#bird" x="3" y="3" width="18" height="18"/></svg></button>
    <button class="m" aria-label="图册"><svg viewBox="0 0 24 24"><path d="M1 14L7 2l16 9-9 12z" fill="#f0e0a0" stroke="#886820"/><path d="M1 14v3l13 7v-2zM14 22l9-10v2l-9 10z" fill="#fff" stroke="#886820" stroke-width=".6"/><ellipse cx="12" cy="11" rx="5" ry="4" fill="#286858"/><circle cx="12" cy="11" r="2" fill="#d0c060"/></svg></button>
    <button class="xl" aria-label="P"><svg viewBox="0 0 24 24"><path d="M0 0h24v24H0z" fill="#f04038"/><path d="M6.500 24V12a6 6 0 1 1 6 6.500" fill="none" stroke="#fff" stroke-width="2.400"/><circle cx="12.500" cy="12" r="2" fill="#fff"/></svg></button>
    <button class="xl" aria-label="远程桌面"><svg viewBox="0 0 24 24"><path d="M1 2l19-1v13l-17 2z" fill="#d8e0f0"/><path d="M3 3.500l15-1v10.500l-13.500 1z" fill="#1c3cc0"/><path d="M6 17h8l2 5H4z" fill="#b8c0cc"/><circle cx="18" cy="18" r="5.500" fill="#e0e4e8" stroke="#888"/><path d="M16 16l2 2-2 2M20.500 16l-2 2 2 2" fill="none" stroke="#287828"/></svg></button>
    <button class="l" aria-label="VMware"><svg viewBox="0 0 24 24"><rect x="8" y="6" width="13" height="15" rx="3" fill="none" stroke="#30a0e8" stroke-width="4"/><rect x="3" y="3" width="15" height="15" rx="3" fill="none" stroke="#f8a820" stroke-width="4"/><path d="M9 2h9a4 4 0 0 1 4 4v6" fill="none" stroke="#30a0e8" stroke-width="3"/></svg></button>
    <button class="xl" aria-label="MT4终端"><svg><use href="#fxlogo"/></svg></button>
    <button class="m" aria-label="文档"><svg viewBox="0 0 24 24"><path d="M2 1h10v9H2zM12 4h11v10H12zM14 9h9v12h-9z" fill="#d8ecfc" stroke="#3888d0"/><path d="M3 3h8M13 6h9" stroke="#3888d0" stroke-width="2"/><circle cx="6" cy="12" r="3.500" fill="#f0a848"/><path d="M1 23c0-9 11-9 11 0z" fill="#38a838"/></svg></button>
    <button class="s" aria-label="TeamViewer"><svg><use href="#tv"/></svg></button>
  </div>
  <div class="cpu"><span>51℃</span><span>CPU温度</span></div>
  <div class="tray">
    <svg><use href="#tv"/></svg>
    <svg viewBox="0 0 16 16"><path d="M1.500 4.500h6v5h-6zM5.500 1.500h7v5h-7z" fill="#ddd" stroke="#888"/><path d="M7 7h8v8H7z" fill="#18a018"/><path d="M11 8v6M8 11h6" stroke="#fff"/></svg>
    <svg viewBox="0 0 16 16"><path d="M1 2h14v12H1z" fill="#20b040"/><path d="M3 4.500h4v3H3zM9 4.500h4v3H9zM3 9.500h4v3H3zM9 9.500h4v3H9z" fill="none" stroke="#fff"/></svg>
    <svg viewBox="0 0 16 16"><path d="M0 0h16v16H0z" fill="#fff"/><use href="#bird" x="1" y="1" width="14" height="14"/></svg>
    <svg viewBox="0 0 16 16"><path d="M7 2C2 4 0 9 2 12l3-3h2zM9 2c5 1 7 6 6 9l-3-4-1 5-2 2z" fill="#104890"/></svg>
    <svg viewBox="0 0 24 24"><use href="#qq" width="24" height="24"/><path d="M9 11h14v9h-7l-3 3v-3H9z" fill="#f8b830"/><path d="M12 15.500h9" stroke="#fff" stroke-width="2" stroke-dasharray="2"/></svg>
    <svg viewBox="0 0 24 24"><use href="#qq" width="24" height="24"/><path d="M9 11h14v9h-7l-3 3v-3H9z" fill="#f8b830"/><path d="M12 15.500h9" stroke="#fff" stroke-width="2" stroke-dasharray="2"/></svg>
    <svg viewBox="0 0 24 24" class="grey"><use href="#qq" width="24" height="24"/></svg>
    <svg><use href="#plus360"/></svg>
    <svg viewBox="0 0 16 16"><path d="M1 10l6-4 3-4 1 4 4 1-2 5-4-2-5 3z" fill="#888"/><circle cx="5" cy="10" r="3" fill="#c83030"/><circle cx="12" cy="11" r="1.500" fill="#d8d8d8"/></svg>
    <svg viewBox="0 0 16 16"><circle cx="8" cy="4" r="3.500" fill="#d8a888"/><path d="M5 2c1-2 5-2 6 0z" fill="#ddd"/><path d="M1 16c0-11 14-11 14 0z" fill="#389080"/><circle cx="6" cy="9" r="3" fill="#e8e8e0"/></svg>
    <svg viewBox="0 0 16 16"><ellipse cx="8" cy="8" rx="6" ry="8" fill="#1058b0"/><path d="M5 5l6 5.500L8 13V3l3 2.500L5 11" fill="none" stroke="#fff" stroke-width="1.200"/></svg>
    <svg viewBox="0 0 16 16"><path d="M0 0h16v16H0z" fill="#e03028"/><path d="M4.500 14V8a3.500 3.500 0 1 1 3.500 4" fill="none" stroke="#f8a8a0" stroke-width="1.700"/></svg>
    <svg viewBox="0 0 16 16"><path d="M4.500 3.500h11v8h-11zM10 12v2.500M6 14.500h8M.5 2.500h3v3h-3zM2 6v8h3" fill="none" stroke="#fff" stroke-width="1.200"/></svg>
    <svg viewBox="0 0 16 16"><path d="M.5 5.500h3l3-3v11l-3-3h-3zM9 6c1 1 1 3 0 4M11 4c2 2 2 6 0 8M13 2.500c3 3 3 8 0 11" fill="none" stroke="#fff"/></svg>
    <span class="ime">英</span>
    <svg viewBox="0 0 16 16"><path d="M1 1h14v14H1z" fill="#fff"/><path d="M4 12.500v-9l4 6 4-6v9" fill="none" stroke="#111" stroke-width="1.600"/></svg>
  </div>
  <div class="clock"><span>8:50</span><span>2017/6/2 星期五</span></div>
  <i class="peek"></i>
</div>

<svg class="float birdball" viewBox="0 0 70 70" aria-hidden="true"><circle cx="35" cy="35" r="34.500" fill="url(#birdBg)"/><use href="#bird" x="2" y="5" width="68" height="60"/></svg>
<svg class="float orb" viewBox="0 0 19 64" aria-hidden="true"><ellipse cx="30" cy="32" rx="28" ry="30" fill="#111" stroke="url(#orbRing)" stroke-width="3.500"/><ellipse cx="32" cy="32" rx="26" ry="26" fill="url(#orbFill)"/></svg>
<script src="chart.js"></script>
</body>
</html>
```
FILE: styles.css
```css
* { box-sizing: border-box; }
html, body { height: 100%; }
body {
  margin: 0;
  display: flex;
  flex-direction: column;
  overflow: hidden;
  background: #f0f0f0;
  color: #000;
  font: 12px/16px "Open Sans", "Noto Sans CJK SC", sans-serif;
}
h1, h2, p, ol, ul, dl, dd { margin: 0; padding: 0; }
ol, ul { list-style: none; }
button { font: inherit; color: inherit; background: none; border: 0; padding: 0; white-space: nowrap; }
svg { display: block; flex: none; }
i { display: block; flex: none; }
.defs { position: absolute; width: 0; height: 0; }
.i10 { width: 10px; height: 10px; }
.i12 { width: 12px; height: 12px; }
.i14 { width: 14px; height: 14px; }
.i16 { width: 16px; height: 16px; }
.i20 { width: 22px; height: 16px; }
.x7 { width: 7px; height: 7px; }

/* Title and menu */
.titlebar { display: flex; align-items: center; height: 20px; flex: none; background: #fff; padding: 0 6px 0 1px; gap: 5px; }
.titlebar h1 { flex: 1; font-size: 13px; font-weight: 600; line-height: 18px; color: #999; white-space: nowrap; padding-bottom: 2px; }
.winbtns { display: flex; gap: 8px; }
.winbtns button { width: 31px; height: 20px; display: grid; place-items: center; }
.menubar { display: flex; align-items: center; height: 22px; flex: none; padding: 0 0 2px 3px; border-bottom: 1px solid #fff; box-shadow: inset 0 -1px #a0a0a0; color: #909090; }
.menubar > button { margin-left: 8px; margin-right: 11px; }
.mdibtns { margin-left: auto; display: flex; gap: 1px; }
.mdibtns button { width: 18px; height: 18px; display: grid; place-items: center; background: #e2e2e2; }

/* Toolbars */
.toolrow { display: flex; align-items: center; justify-content: space-between; height: 27px; flex: none; }
.toolbar { display: flex; align-items: center; height: 27px; border-bottom: 1px solid #a0a0a0; }
.second { border-bottom: 1px solid #a0a0a0; }
.second .toolbar { border-bottom: 0; }
.grip { width: 3px; height: 19px; margin: 0 1px; background: repeating-linear-gradient(#a0a0a0 0 1px, #f0f0f0 1px 3px); }
.tb { width: 26px; height: 23px; margin: 0 1px; display: flex; align-items: center; justify-content: center; flex: none; border: 1px solid transparent; }
.tb svg { width: 16px; height: 16px; }
.tb.on { background: #f8f8f8; border-color: #a0a0a0 #fff #fff #a0a0a0; }
.tb.wide { width: 66px; gap: 3px; }
.tb.auto { width: 78px; }
.drop { width: 11px; height: 22px; display: grid; place-items: center; }
.drop svg { width: 5px; height: 3px; }
.sep { width: 1px; height: 20px; margin: 0 2px 0 3px; background: #a0a0a0; }
.edge { width: 1px; height: 26px; margin-left: 2px; background: #a0a0a0; }
.glyph { font-weight: 600; font-size: 13px; color: #444; }
.tf { font-size: 10px; color: #b0b0b0; }
.topright { display: flex; gap: 14px; padding-right: 6px; align-items: center; }

/* Workspace */
.workspace { flex: 1; display: flex; min-height: 0; }
.dock { flex: none; width: 432px; display: flex; flex-direction: column; border-right: 1px solid #a0a0a0; border-bottom: 1px solid #a0a0a0; }
.pane { display: flex; flex-direction: column; min-height: 0; padding: 0 2px 4px 2px; }
.market { flex: 0 0 331px; padding-bottom: 3px; border-bottom: 1px solid #a0a0a0; }
.navigator { flex: 1; padding-top: 1px; }
.panetitle { display: flex; align-items: flex-start; height: 15px; flex: none; }
.panetitle h2 { flex: 1; height: 13px; margin-top: 1px; font-weight: 400; font-size: 12px; line-height: 12px; padding-left: 2px; background: linear-gradient(90deg, #bfcddb, #d7e4f2); }
.panetitle button { width: 14px; height: 14px; display: grid; place-items: center; }
.box { flex: 1; min-height: 0; display: flex; background: #fff; border: 1px solid #a0a0a0; border-right: 0; border-bottom: 1px solid #000; overflow: hidden; }
.listwrap { flex: 1; min-width: 0; overflow: hidden; }
table { width: 100%; border-collapse: separate; border-spacing: 0; table-layout: fixed; }
.c1 { width: 152px; }
.c2, .c3 { width: 102px; }
th { height: 25px; font-weight: 400; text-align: right; padding: 0 5px 2px; border-right: 1px solid #e5e5e5; }
th:first-child { text-align: left; }
td { height: 21px; line-height: 16px; text-align: right; padding: 0 2px; border-right: 1px solid #c0c0c0; border-bottom: 1px solid #c0c0c0; background: #e0ffff; }
th:last-child, td:last-child { border-right: 0; padding-right: 4px; }
td svg { float: left; width: 10px; height: 10px; margin: 4px 0 0 -16px; }
.hot td { background: #70ff70; }
.u td { color: #0000ff; }
.d td { color: #ff0000; }
tr td:first-child { text-align: left; color: #000; padding-left: 20px; }
.scroll { width: 16px; flex: none; background: #f0f0f0; display: flex; flex-direction: column; align-items: center; padding: 6px 0 5px; gap: 5px; }
.scroll svg { width: 8px; height: 5px; }
.scroll svg:last-child { margin-top: auto; }
.thumb { width: 15px; background: #cdcdcd; }
.short { height: 36px; }
.long { flex: 1; margin-top: 32px; }
.tabs { display: flex; flex: none; height: 23px; color: #707070; margin-left: 3px; }
.tabs button { height: 20px; padding: 0 10px; position: relative; }
.tabs button + button::after { content: ""; position: absolute; right: 0; top: 4px; height: 15px; border-right: 1px solid #606060; }
.tabs .sel { height: 22px; margin-top: -1px; padding: 0 9px; background: #fff; border: 1px solid #000; border-top-color: #fff; color: #000; box-shadow: 1px 1px #a0a0a0; }
.tabs .sel.sel::after { display: none; }
.tree { flex: 1; padding: 1px 0 0 3px; min-width: 0; }
.tree li { display: flex; align-items: center; height: 20px; white-space: nowrap; }
.tree svg { width: 16px; height: 16px; margin: 0 6px 0 2px; }
.g { width: 21px; height: 20px; position: relative; }
.g.v::before, .g.end::before { content: ""; position: absolute; left: 10px; top: 0; height: 20px; border-left: 1px dotted #808080; }
.g.end::before { height: 10px; }
.g.h::after { content: ""; position: absolute; left: 10px; right: 0; top: 10px; border-top: 1px dotted #808080; }
.g b { position: absolute; z-index: 1; left: 6px; top: 6px; width: 9px; height: 9px; border: 1px solid #919191; background: #fff; font: 9px/7px "Liberation Sans", sans-serif; text-align: center; color: #2a4a90; }

/* Chart */
.chartarea { flex: 1; min-width: 0; display: flex; flex-direction: column; padding: 0 2px 0 1px; }
.chart { flex: 1; min-height: 0; position: relative; display: grid; grid-template: minmax(0, 1fr) 17px / minmax(0, 1fr) 39px; background: #000; color: #fff; padding: 2px 0 0 3px; font-size: 9px; line-height: 12px; overflow: hidden; }
.plot { position: relative; border: 1px solid #fff; overflow: hidden; }
.candles { width: 100%; height: 100%; }
.ohlc { position: absolute; left: 4px; top: 2px; font-size: 9px; white-space: nowrap; }
.info { position: absolute; left: 0; top: 15px; width: 330px; height: 245px; background: #000; border: 1px solid #6d6d6d; font-size: 12px; line-height: 20px; color: #1e90ff; padding: 13px 0 0 9px; }
.spread { display: flex; font-family: "Liberation Mono", "Noto Sans CJK SC", monospace; }
.spread span:first-child { width: 42px; }
.spread span:nth-child(3) { margin: 0 3px 0 10px; }
.state { display: flex; margin-top: 9px; height: 20px; }
.magenta { width: 95px; color: #ff00ff; }
.lime { color: #00ff00; font-size: 16px; display: flex; align-items: center; }
.lime s { text-decoration: none; font-size: 12px; }
.info dl { display: grid; grid-template-columns: 71px 1fr; margin-left: 94px; }
.info hr { width: 96px; margin: 9px 0 10px 95px; border: 0; border-top: 1px solid #ff4500; }
.info .sell { color: #ff4500; }
.prices { grid-row: 1 / 3; grid-column: 2; padding-top: 8px; overflow: hidden; }
.prices li { height: 33px; display: flex; align-items: center; gap: 3px; white-space: nowrap; }
.prices li::before { content: ""; width: 2px; height: 1px; background: #fff; flex: none; }
.bid { position: absolute; right: 0; bottom: 32px; width: 38px; padding-left: 4px; line-height: 11px; background: #fff; color: #000; }
.times { grid-row: 2; grid-column: 1; display: grid; grid-auto-flow: column; grid-auto-columns: 64px; justify-content: start; white-space: nowrap; }
.charttabs { height: 22px; border-top: 1px solid #000; box-shadow: 0 -1px #fff; margin-left: 0; padding-left: 2px; }
.charttabs button { padding: 1px 13px 0; }
.charttabs .sel { padding: 1px 12px 0; }
.charttabs button:first-child::after { content: ""; position: absolute; right: 0; top: 4px; height: 15px; border-right: 1px solid #606060; }
.charttabs button:nth-last-child(3)::after { display: none; }
.tabnav { margin-left: auto; display: flex; gap: 14px; padding: 5px 7px; }
.tabnav svg { width: 4px; height: 7px; }

/* Strategy tester */
.tester { flex: none; display: flex; padding: 4px 3px 0 0; border-bottom: 1px solid #a0a0a0; font-family: "Liberation Mono", "Noto Sans CJK SC", monospace; color: #6d6d6d; }
.strip { width: 14px; flex: none; display: flex; flex-direction: column; }
.strip button { height: 14px; display: grid; place-items: center; width: 12px; }
.strip h2 { flex: 1; width: 13px; margin: 0 0 3px; font: 12px/13px "Open Sans", "Noto Sans CJK SC", sans-serif; writing-mode: vertical-rl; transform: rotate(180deg); color: #000; background: linear-gradient(#99b4d1, #b9d1ea); }
.testbody { flex: 1; min-width: 0; border: 1px solid #a0a0a0; border-width: 1px 1px 0; }
.form { padding: 8px 9px 0 7px; background: #fff; border-bottom: 1px solid #000; }
.row { display: flex; height: 29px; align-items: flex-start; }
.row.last { margin-top: 42px; height: 30px; }
.btn { width: 150px; height: 23px; margin-left: 7px; background: #f0f0f0; border: 1px solid #999; text-align: center; flex: none; }
.btn:disabled { color: #6d6d6d; }
.combo { position: relative; display: flex; align-items: center; height: 20px; margin: 1px 0 0 7px; padding-right: 18px; border: 1px solid #bfbfbf; background: #ccc; }
.combo:first-child { margin-left: 0; }
.combo select, .combo input, .date input { appearance: none; flex: 1; min-width: 0; width: 100%; height: 18px; margin: 0; border: 0; padding: 0 2px; background: none; font: inherit; line-height: 18px; color: #6d6d6d; opacity: 1; }
.combo svg { position: absolute; right: 4px; width: 10px; height: 6px; }
.combo.edit { background: #fff; }
.combo.edit input { background: #f0f0f0; height: 14px; margin: 0 2px 1px; padding: 0; line-height: 14px; }
.kind { width: 120px; flex: none; }
.grow { flex: 1; min-width: 0; }
.latin { font-size: 10px; }
.picked.edit input { background: linear-gradient(90deg, #3399ff 25px, #f0f0f0 25px); }
.lead { width: 120px; text-align: right; line-height: 24px; padding-right: 2px; flex: none; }
.lead.check { width: 106px; padding: 0; margin-right: 4px; }
.check, .lead.check { line-height: 31px; }
.mid { width: 126px; text-align: right; line-height: 24px; flex: none; }
input[type=checkbox] { appearance: none; width: 17px; height: 17px; margin: 6px 0 0; border: 1px solid #888; background: #fff; flex: none; }
input[type=checkbox]:checked::before { content: "✔"; display: block; font: 12px/13px "DejaVu Sans", sans-serif; color: #000; padding-left: 2px; }
.from { margin-left: 101px; width: 26px; line-height: 24px; }
.to { margin-left: 107px; width: 27px; line-height: 24px; }
.date { display: flex; align-items: center; width: 120px; height: 20px; margin-top: 1px; border: 1px solid #7a7a7a; background: #fff; font-size: 10px; flex: none; padding-right: 5px; }
.date input { padding: 0 1px; }
.date svg { width: 20px; height: 14px; }
.date.off svg { opacity: .4; }
.date:not(.off) input { color: #000; }
.opt { margin-left: auto; padding-right: 4px; }
input[type=range] { appearance: none; width: 166px; height: 20px; margin: 3px 0 0 14px; background: none; }
input[type=range]::-webkit-slider-runnable-track { height: 9px; border: 1px solid #a0a0a0; background: #fff; }
input[type=range]::-webkit-slider-thumb { appearance: none; width: 9px; height: 19px; margin-top: -6px; border: 1px solid #999; background: #f0f0f0; }
.step { width: 23px; margin-left: 14px; color: #000; padding: 0; }
.skip { color: #000; margin-right: 7px; }
progress { appearance: none; flex: 1; height: 20px; margin-top: 1px; border: 1px solid #bcbcbc; background: #e6e6e6; }
progress::-webkit-progress-bar { background: #e6e6e6; }
progress::-webkit-progress-value { background: #06b025; }
.stop { color: #000; font-weight: 700; }
.testbody .tabs { height: 27px; margin-left: 2px; font-family: "Open Sans", "Noto Sans CJK SC", sans-serif; }

/* Status bar */
.status { display: flex; align-items: center; height: 22px; flex: none; border-top: 1px solid #fff; white-space: nowrap; }
.status span { height: 18px; line-height: 18px; border-left: 1px solid #a0a0a0; padding-left: 5px; flex: none; }
.status .help { flex: 1; border: 0; padding-left: 1px; }
.status .s1 { width: 135px; }
.status .s2 { width: 117px; }
.status .s3 { width: 80px; }
.status .net { width: 144px; display: flex; align-items: center; gap: 4px; }
.net svg { width: 23px; height: 13px; }

/* Taskbar */
.taskbar { flex: none; height: 33px; overflow: hidden; display: flex; align-items: flex-start; background: linear-gradient(90deg, #0d0f10, #1c1613 30%, #17120f 60%, #101010 72%, #081008 78%, #000 90%); color: #fff; }
.apps { display: flex; padding-left: 10px; flex: none; }
.apps button { width: 24px; height: 40px; display: grid; place-items: center; flex: none; }
.apps svg { width: 24px; height: 24px; }
.apps .xl { margin-left: 26px; }
.apps .l { margin-left: 25px; }
.apps .m { margin-left: 20px; }
.apps .s { margin-left: 15px; }
.cpu, .clock { display: flex; flex-direction: column; text-align: center; line-height: 18px; padding-top: 2px; white-space: nowrap; }
.cpu { margin-left: auto; width: 70px; }
.tray { display: flex; align-items: center; height: 40px; gap: 8px; margin-left: 8px; flex: none; }
.tray svg { width: 16px; height: 16px; }
.grey { filter: grayscale(1) brightness(2); }
.ime { font-size: 14px; margin-right: 4px; }
.clock { width: 124px; padding-left: 9px; }
.peek { width: 5px; height: 40px; border-left: 1px solid #555; }

/* Floating desktop widgets */
.float { position: absolute; right: 0; }
.birdball { width: 70px; height: 70px; right: 4px; top: 158px; }
.orb { width: 19px; height: 64px; top: 306px; }
```
FILE: chart.js
```js
// Candle rows: x, high, body top, body bottom, low, kind (w = bearish, h = bullish, d = doji)
const data = `629 340 340 382 391 w|637 375 383 406 420 w|645 379 382 405 411 h|653 340 340 382 390 h|661 340 340 374 376 w|669 340 340 373 375 h|677 340 340 362 375 w|685 340 362 375 394 w|693 340 340 375 396 h|765 280 280 287 287 h|773 279 282 286 292 h|781 282 282 289 304 w|789 262 264 288 293 h|797 264 264 272 277 w|805 272 272 309 312 w|813 293 305 308 314 h|821 272 275 305 305 h|829 261 276 282 297 w|837 272 272 282 288 h|845 268 272 418 438 w|853 418 418 442 466 w|861 439 442 446 467 w|869 426 439 446 452 h|877 438 439 482 485 w|885 466 482 491 497 w|893 491 491 512 530 w|901 508 512 536 544 w|909 512 518 536 536 h|917 504 517 518 523 d|925 513 517 561 564 w|933 526 540 561 567 h|941 529 539 554 556 w|949 546 553 556 560 w|957 555 556 581 581 w|965 550 573 581 586 h|973 569 573 588 588 w|981 585 588 603 608 w|989 588 591 603 609 h|997 574 576 591 595 h|1005 550 560 576 578 h|1013 559 560 574 576 w|1021 572 574 578 580 w|1029 568 569 578 581 h|1037 567 569 577 577 w|1045 569 576 579 588 w|1053 576 580 585 590 w|1061 582 582 585 586 h|1069 580 581 585 585 w|1077 574 575 585 585 h|1085 568 574 575 577 d|1093 568 572 574 576 h|1101 567 568 571 577 h|1109 555 557 567 569 h|1117 554 557 561 563 w|1125 560 561 581 582 w|1133 574 581 583 585 w|1141 573 576 583 584 h|1149 575 575 594 595 w|1157 579 587 594 602 h|1165 586 587 606 608 w|1173 605 605 605 618 d|1181 584 587 606 607 h|1189 571 576 588 590 h|1197 546 574 575 583 d|1205 565 573 574 580 d|1213 571 572 575 576 w|1221 564 565 575 576 h|1229 556 559 565 568 h|1237 558 559 565 566 w|1245 564 565 573 579 w|1253 565 570 573 573 h|1261 568 570 576 578 w|1269 567 568 576 578 h|1277 568 568 571 579 w|1285 568 569 571 572 h|1293 563 568 569 571 d|1301 561 568 569 576 d|1309 567 569 589 593 w|1317 570 578 589 589 h|1325 553 567 577 577 h|1333 550 550 566 570 h|1341 549 550 554 571 w|1349 544 554 557 570 w|1357 550 557 600 600 w|1365 590 595 600 633 h|1373 578 594 621 621 w|1381 602 609 621 636 h|1389 571 572 609 618 h|1397 551 564 570 592 h|1405 530 561 564 576 h|1413 561 561 602 611 w|1421 579 600 600 636 d|1429 592 600 617 620 w|1437 581 603 617 636 h|1445 598 603 652 658 w|1453 632 645 652 653 h|1461 625 625 645 650 h|1469 610 617 625 630 h|1477 613 617 640 642 w|1485 613 616 640 647 h|1493 616 616 644 648 w|1501 643 644 668 672 w|1509 665 668 673 685 w|1517 656 658 673 677 h|1525 633 655 658 662 h|1533 646 646 656 668 h|1541 633 634 646 661 h|1549 627 634 661 662 w|1557 660 661 682 686 w|1565 673 682 698 703 w|1573 691 698 700 700 w`;

const green = '#00ff00';
let out = '';
for (const row of data.split('|')) {
  const [xs, hs, ts, bs, ls, kind] = row.split(' ');
  const [x, high, top, bottom, low] = [xs, hs, ts, bs, ls].map(Number);
  out += `<path d="M${x + 0.5} ${high}V${low + 1}" stroke="${green}"/>`;
  if (kind === 'd') {
    out += `<rect x="${x - 2}" y="${top}" width="5" height="${bottom - top + 1}" fill="${green}"/>`;
  } else {
    out += `<rect x="${x - 1.5}" y="${top + 0.5}" width="4" height="${bottom - top}" fill="${kind === 'w' ? '#fff' : '#000'}" stroke="${green}"/>`;
  }
}

// Closed trades: entry arrow, dashed link, exit arrow
for (const [x1, y1, x2, y2] of [[794, 265, 813, 305], [1114, 557, 1133, 578], [1338, 550, 1365, 597]]) {
  out += `<path d="M${x1 + 4} ${y1}L${x2} ${y2}" stroke="#f01010" stroke-dasharray="3 3"/>`;
  out += `<path d="M${x1 - 3} ${y1 - 2}h2v-2l6 4-6 5v-3h-2z" fill="#ff1493" stroke="#fff"/>`;
  out += `<path d="M${x2 - 1} ${y2}l5-4v8z" fill="#ffee00" stroke="#fff"/>`;
}

// Level marks, bid line, shift marker and time ticks
for (const [x, y] of [[794, 128], [1114, 205], [1338, 261], [794, 564]]) {
  out += `<path d="M${x} ${y + 0.5}h7" stroke="#ffff00"/>`;
}
out += '<path d="M437 700.5H4000" stroke="#778899"/><path d="M1580 99h11l-5.500 5z" fill="#778899"/>';
for (let x = 501; x <= 1525; x += 64) out += `<path d="M${x + 0.5} 716v3" stroke="#fff"/>`;

document.getElementById('candles').innerHTML = `<g transform="translate(-437 -99)" shape-rendering="crispEdges">${out}</g>`;
```
